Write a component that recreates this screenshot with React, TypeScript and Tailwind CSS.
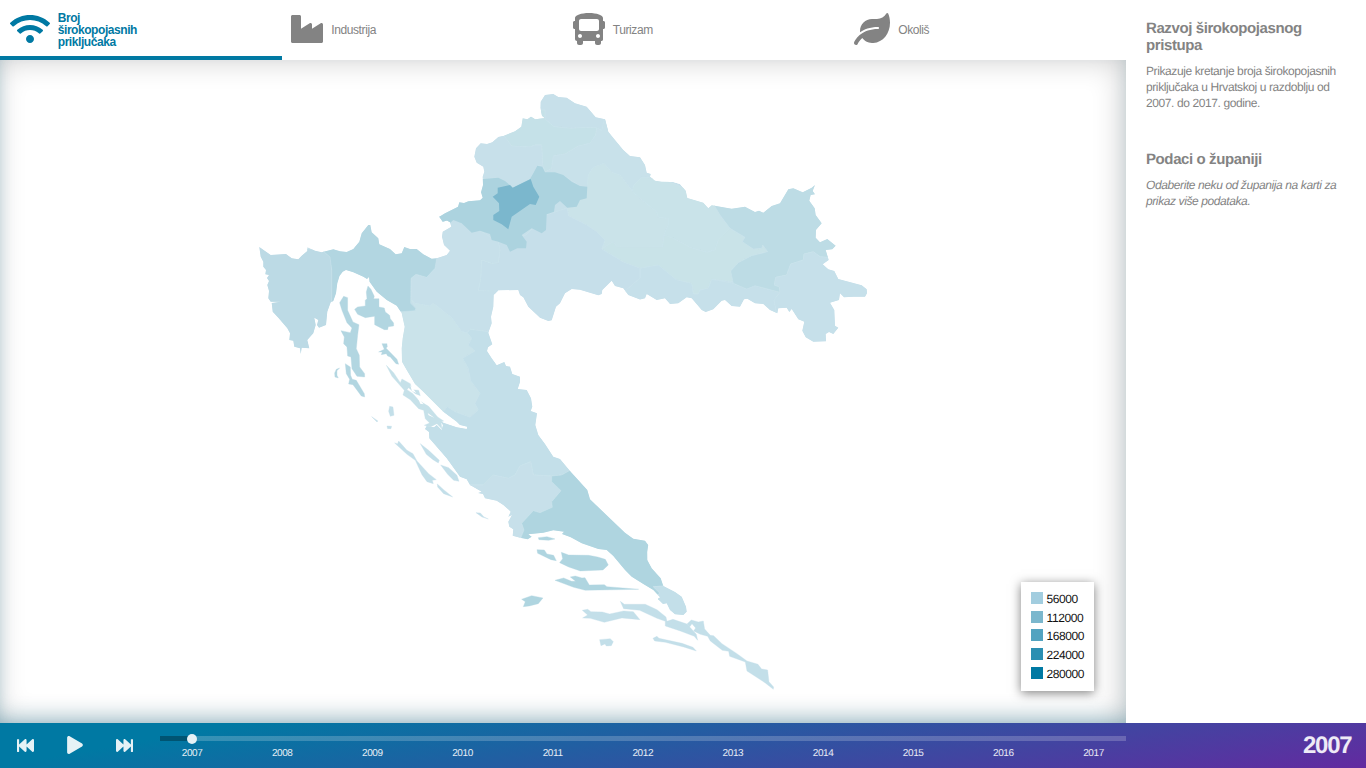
import { FaBus, FaFastBackward, FaFastForward, FaIndustry, FaLeaf, FaPlay, FaWifi } from "react-icons/fa";

const tabs = [
  { label: "Broj širokopojasnih priključaka", Icon: FaWifi, size: "w-10", active: true },
  { label: "Industrija", Icon: FaIndustry, size: "w-8", active: false },
  { label: "Turizam", Icon: FaBus, size: "w-8", active: false },
  { label: "Okoliš", Icon: FaLeaf, size: "w-9", active: false },
];

const legend = [
  { value: "56000", color: "bg-[#a2cddf]" },
  { value: "112000", color: "bg-[#7bb7cd]" },
  { value: "168000", color: "bg-[#53a3c0]" },
  { value: "224000", color: "bg-[#2b8fb2]" },
  { value: "280000", color: "bg-[#0079a3]" },
];

const years = [2007, 2008, 2009, 2010, 2011, 2012, 2013, 2014, 2015, 2016, 2017];

const mainland =
  "M540.7 101.7L540.5 108 542 115.7 545 118.3 535 119.3 531 116.7 527.3 119.3 522.7 118.3 521.3 126.7 515 131.3 504 135.7 498.3 137 492.3 142.3 487 144 480.7 143.3 476 148.3 474.3 156.7 476.7 162.7 483.3 166.7 484.3 171.7 482.7 176.7 483 185 481 192.3 482.7 197.7 480 200.3 468.3 201.3 464 203 459.3 202.3 458 206.7 445 213.3 439.3 216.7 442.7 221.7 447 220.5 450 222.3 451.3 226.7 442.7 231.7 442 236.7 444 245 450 250.7 446.7 255 436.7 258.3 431.7 258.7 423.3 254.3 416.7 249 410 249 404.3 247 401.7 253.3 395.7 254.3 390 249 379.3 244.3 378.3 238.3 371.7 232.3 370.3 225 368.3 225 361.7 233.3 359.3 241.7 353.3 249 346.7 252 340 251.3 333.3 249.3 321.7 252.3 315 250.7 307.3 247 307.3 251 301.7 255.7 298.3 259.3 291.7 258.3 286 254 270.7 255 265 251 259.3 247 260.7 256.7 263.3 261.7 263.3 266.7 266 270 265.3 274.3 269 275 267 278 269 281 267.3 285 269 291 268.3 298.3 270.7 301.7 280.7 301.7 271.7 303 272.7 311.7 278.3 317.7 287.3 328.3 290 333.3 289.3 340 293.3 340.7 294.3 346.7 300 348.3 300.7 354 301.7 347.7 309.3 348.3 307.3 340 313.3 333.3 315.7 325 314.3 317.7 318.3 320 317 325 319 327.7 326 325 327.3 311.7 330.7 302.3 333.3 301 336 293.3 337.3 283.3 339.5 276 342.7 271.7 346 270 353.3 272.3 363.3 276.7 367 279 369 277 369.5 281.7 376.7 291.7 386.7 300 396.7 305.7 401.7 313.3 404.7 326.7 402.7 338.3 401.7 348.3 402 361.7 406.7 370 415 384 423.3 391.7 443.3 411.7 456.7 421.7 460 425 467.3 426.7 466.7 429 456.7 427.3 443.3 422.7 439 420 443 425 441.7 430 436.7 425 434 427.3 426.7 426 425 429 429 432 429.3 438.3 436.7 446.7 446.7 458.3 460 476.7 466.7 479.3 470 485 481.7 491.7 478 493 483 494 485 498.3 496.7 500.7 503.3 505 509 510 510.7 511.7 508.3 516.7 512 515 508.3 521.7 509.3 526.7 513.3 529.3 512.7 535.7 520 537.7 527.7 539.3 531.7 536.7 528.3 534.3 543.3 532.7 553.3 530.3 564 531.7 562 534 570.7 537.3 581.7 543.3 598.3 549 606.7 550 613.3 556 625 570 631.7 576.7 643.3 584 653.3 590 660 597.3 658 599 663 604 666.7 603.3 670 610 675 614.3 683.3 615 686.7 611.7 686 606.7 681.7 596.7 675 592 663.3 586 660.7 578.3 651.7 568.3 647.3 560 647.2 552 648.2 545 645 540.7 633.3 538.7 625 532.7 590 499.3 587.3 490 570.7 471.7 565 465 560 459 553.3 456.7 545 444 538.3 435 535.3 425 537 413.3 530.7 411 532.3 406.7 531 398.3 526.7 390 517.7 389 520 382 520 376.7 512.3 374 510 366.7 506 366 504.3 362 496.7 365.3 491.7 358.3 487 351 488 347.3 492.3 344.3 488.3 332.7 491.7 323.3 491 316.7 493.3 306.7 493.7 295 498.3 290.3 518.3 290 520 295 523.3 297.3 528.3 306.7 540 317.7 548.3 321 551.7 320.3 556 306.7 560 303.3 565 293.3 571.7 289 580 289.7 598.3 295.3 601.7 294 602.3 290 611.7 280.7 615 286 623.3 288.3 628.3 295 640 299.5 645 298.3 646.7 294 656.7 300 665 298.3 670 304 678.3 303.3 686.7 297.3 691.7 298.3 701.7 310 705.7 312 713.3 309.3 721.7 300.7 725 300 731.7 306 740 306.7 744 299.3 747.3 298.7 755 303.3 763.3 304 770 310 777.3 313.3 778.3 308.3 786.7 307.7 789.3 312 791.7 309 798.3 319.3 804.3 321.7 802.3 330.7 805.7 337.3 813.3 341.7 826 341.3 825.7 334 829 332 833.3 334 838.3 327.7 835 325.7 834.3 310 830 302.7 839 300 840 293.3 844 297.3 853.3 296.7 865 296.7 867 293.3 866.7 289.3 861.7 285.3 838.3 279 834.3 271 828.3 269.3 822.7 264.3 828.7 260 825.7 250 832.3 249.3 835.7 245.7 827.3 239 820 242.3 815.7 237.7 816 230 821.7 223.3 815.7 215 814.7 208.3 809.3 200.7 810.7 195 815 194.3 812.7 191 815 185 811.7 187.7 802.7 192.3 793.3 188.3 788.3 189.3 780 203.3 771.7 206 763.3 212.7 759 210.7 755 212 745 206.7 731.7 208.7 711.7 205.3 708.3 208.3 703.3 202.7 687.3 198 685.7 190.7 680 184 673.3 182 661.7 181.7 655 180.7 650 176.7 650.7 174 646.7 172.7 645 165 640 157.3 630 156 623.3 150 615 140 608.3 131.7 605 119.3 595.7 117.3 586.7 106.7 575 103.3 566.7 97.7 558.3 97 553.3 94 545 95Z";

// Outer edges run past the coast; the mainland clip path trims them.
const counties = [
  { name: "Međimurska", fill: "#c7e0ea", d: "M530 85H620V131L601.7 130.7 596.7 127.7 583 127.5 570 128.3 554 126.7 545 119 530 119Z" },
  { name: "Varaždinska", fill: "#c5e1e8", d: "M545 119L554 126.7 570 128.3 583 127.5 596.7 127.7 595.7 135 590 143.3 578.3 146 565 154 553.3 156 551.7 168.3 545 172 542.7 165 541.7 145 535 145 530 147 511.7 146 504 135.7 510 110 545 110Z" },
  { name: "Koprivničko-križevačka", fill: "#c8e1ea", d: "M596.7 127.7L601.7 130.7 605 115 660 150 660 180 641.7 177.3 634 185 632.3 191 620 175 611.7 172.3 604 163.3 593.3 167.3 588.3 175 587.3 187 580 186 563 175 551.7 172 551.7 168.3 553.3 156 565 154 578.3 146 590 143.3 595.7 135Z" },
  { name: "Krapinsko-zagorska", fill: "#c7e0ea", d: "M504 135.7L511.7 146 530 147 535 145 541.7 145 542.7 165 537 166 533 174 530.7 179 512.7 187.7 498 178 465 179 465 140Z" },
  { name: "Bjelovarsko-bilogorska", fill: "#cae3e9", d: "M587 187L588.3 175 593.3 167.3 604 163.3 611.7 172.3 620 175 632.3 191 640 198.3 656.7 211.7 658.3 217.3 668.3 218.3 668.3 225 664 235 662.7 246.7 640 247.3 613.3 247 601.7 249 605 240 596.7 231.7 586.7 225 568.3 215.7 567.3 208Z" },
  { name: "Virovitičko-podravska", fill: "#c9e3e9", d: "M660 178L641.7 177.3 634 185 632.3 191 640 198.3 656.7 211.7 658.3 217.3 668.3 218.3 668.3 225 664 235 668.3 240 673.3 238.3 690 247.3 706.7 252.3 715 250 718.3 240 730 228.3 720 215 712.7 200Z" },
  { name: "Požeško-slavonska", fill: "#c9e3e8", d: "M601.7 249L613.3 241.7 617 246.7 662.7 246.7 664 235 673.3 238.3 690 247.3 706.7 252.3 715 250 718.3 240 730 228.3 745 237.3 742.3 241.7 753.3 249 761.7 248.3 762.7 245 767.7 251.7 751.7 255.7 738.3 262.7 730.7 271 733.3 281.7 711.7 279.3 708.3 288.3 700 290 698.3 294 693.3 294 691.7 283.3 676.7 280 658.3 265 640 268.3 623.3 262Z" },
  { name: "Brodsko-posavska", fill: "#c6e0ea", d: "M626 290L640 278 640 268.3 658.3 265 676.7 280 691.7 283.3 693.3 294 698.3 294 700 290 708.3 288.3 711.7 279.3 733.3 283.3 746.7 289 755 285.7 780 292.3 774 300 777.3 316 620 320Z" },
  { name: "Osječko-baranjska", fill: "#bddce5", d: "M711 200L840 175 845 250 827.3 257.3 820 256.7 813.3 251.7 804 254 803.3 260 790.7 264 786.7 275 775.7 277.3 774.3 285 779.3 286.7 780 292.3 755 285.7 746.7 289 733.3 283.3 730.7 271 738.3 262.7 751.7 255.7 767.7 251.7 762.7 245 761.7 248.3 753.3 249 742.3 241.7 745 237.3 730 228.3 720 215Z" },
  { name: "Vukovarsko-srijemska", fill: "#c6e0ea", d: "M827.3 257.3L820 256.7 813.3 251.7 804 254 803.3 260 790.7 264 786.7 275 775.7 277.3 774.3 285 779.3 286.7 780 292.3 774 300 777.3 318 800 350 880 350 880 260Z" },
  { name: "Sisačko-moslavačka", fill: "#c6dfea", d: "M498.3 242L526 235 546 215 567.3 208 568.3 215.7 586.7 225 596.7 231.7 605 240 601.7 249 623.3 262 640 268.3 640 278 626 290 620 330 520 330 493.3 291.7 478.3 290.7 480.7 278.3 481.7 260 491.7 263.3 498.3 262.7 500 250Z" },
  { name: "Karlovačka", fill: "#c7e0ea", d: "M436.7 258.3L430 220 455 215 498.3 242 500 250 498.3 262.7 491.7 263.3 481.7 260 480.7 278.3 478.3 290.7 500 291 500 329 488.3 331.7 470 329.3 467.3 332.7 461.7 331.7 451.7 317.7 433.3 303.3 430 306 415 303.3 411 300 411 278.3 416 274.3 426.7 277.3 435 268.3Z" },
  { name: "Ličko-senjska", fill: "#cae3ea", d: "M402 311.7L415 310.7 415.7 308.3 411.7 300 415 303.3 430 306 433.3 303.3 451.7 317.7 461.7 331.7 467.3 332.7 471.7 338.3 468.3 345 475 351 462.7 358.3 468.3 368.3 470.7 380.7 480 393.3 475 403.3 478.3 410 470 417.3 455 411.7 447.3 406.7 443.3 411.7 425 410 390 360Z" },
  { name: "Zadarska", fill: "#c3dfe9", d: "M467.3 332.7L470 329.3 488.3 331.7 600 330 569.3 470.7 561.7 475 551.7 476 533.3 475 530.7 461.7 520 466 515 475 508.3 478.3 493.3 475 483.3 485 470 485 410 450 410 410 443.3 411.7 447.3 406.7 455 411.7 470 417.3 478.3 410 475 403.3 480 393.3 470.7 380.7 468.3 368.3 462.7 358.3 475 351 468.3 345 471.7 338.3Z" },
  { name: "Šibensko-kninska", fill: "#c7e0ea", d: "M470 485L483.3 485 493.3 475 508.3 478.3 515 475 520 466 530.7 461.7 533.3 475 551.7 476 551.7 481.7 561 490.7 551.7 501.7 552.3 507.3 540 512.7 533.3 510.7 521.7 523.3 524 530 518.3 540 470 540Z" },
  { name: "Splitsko-dalmatinska", fill: "#afd5e0", d: "M569.3 470.7L561.7 475 551.7 476 551.7 481.7 561 490.7 551.7 501.7 552.3 507.3 540 512.7 533.3 510.7 521.7 523.3 524 530 518 545 640 600 660 600 656.7 595 660 593.3 653.3 586.7 664 586 670 540 590 470Z" },
  { name: "Dubrovačko-neretvanska", fill: "#c3dfe9", d: "M664 586L653.3 586.7 660 593.3 656.7 596 660 620 700 620 700 590Z" },
  { name: "Primorsko-goranska", fill: "#b2d6e1", d: "M436.7 258.3L435 268.3 426.7 277.3 416 274.3 411 278.3 410.7 303.3 415.7 308.3 415 310.7 402 311.7 340 300 331.7 305 331.7 270 329 257 322 251 322 215 440 215Z" },
  { name: "Istarska", fill: "#bcdae5", d: "M323 251L330 257 331.7 270 331.7 305 330 360 250 360 250 240Z" },
  { name: "Zagrebačka", fill: "#acd3df", d: "M470 179L483 179 498.3 177.7 505 181 512.7 187.7 530 179 533.3 173.3 537.3 165.7 542.3 166.7 545 172.3 555 172.3 563.3 175 571.7 181.7 580 186 587.3 186.7 586.7 198.3 580 200 576.7 206.7 567.3 207.7 560 201 555 205 554 211.7 546.7 214.3 546 230 541.7 233.3 531.7 228.3 521.7 235 526.7 241.7 526 248.3 517.3 248.3 510 251.7 506.7 245 498.3 241.7 491.7 240 490 234 480 230.7 471.7 232.7 461.7 223.3 453.3 220 450 223 430 224 430 205Z" },
  { name: "Grad Zagreb", fill: "#7bb7cd", d: "M530.7 179L533.3 186.7 539.3 196.7 535.7 205 530 204 511.7 216.7 508.3 229.3 501.7 224.3 493.3 220 493.3 215 499.3 211 499 203.3 492.7 196.7 497.7 193.3 497.7 187.7 510 185 512.7 187.7Z" },
];

function CountyMap() {
  return (
    <svg viewBox="0 60 1126 663" className="block h-full w-full">
      <clipPath id="mainland">
        <path d={mainland} />
      </clipPath>
      <g clipPath="url(#mainland)">
        <path d={mainland} fill="#c7e0ea" />
        {counties.map((c) => (
          <path key={c.name} d={c.d} fill={c.fill} stroke="#cde5ec" strokeLinejoin="round" strokeWidth={c.name === "Grad Zagreb" || c.name === "Zagrebačka" ? 0 : 0.5}>
            <title>{c.name}</title>
          </path>
        ))}
      </g>

      {/* Kvarner islands */}
      <g transform="translate(250.3 215.3) scale(.33333)" fill="#b2d6e1" stroke="#b2d6e1" strokeWidth="1" strokeLinejoin="round">
        <path d="M268 262L280 243 292 247 292 285 308 320 326 328 322 360 318 400 327 420 328 455 343 475 343 485 320 483 305 460 302 425 292 422 290 395 280 385 282 365 272 346 300 352 305 338 290 322 275 285Z" />
        <path d="M353 212L362 222 372 243 370 250 386 250 386 275 402 278 405 290 418 300 420 310 430 323 430 332 414 334 412 343 402 343 373 328 373 303 345 307 322 297 313 282 322 275 345 272 345 255 350 250 348 230Z" />
        <path d="M395 385L410 385 411 395 407 398 440 432 445 447 437 445 420 425 412 422 408 415 393 418 396 410 385 410 402 402Z" />
        <path d="M268 458L260 466 260 480 264 488 254 485 253 473 258 462Z" />
        <path d="M285 445L300 455 301 480 306 492 318 495 342 535 343 545 333 542 308 508 295 506 298 492 288 475Z" />
      </g>

      {/* Pag and the Zadar archipelago */}
      <g transform="translate(360.3 250.3) scale(.33333)" fill="#c6e1e9" stroke="#c6e1e9" strokeWidth="1" strokeLinejoin="round">
        <path d="M78 345L100 367 120 397 125 386 150 400 155 418 175 420 180 436 165 430 145 412 140 418 158 430 175 450 205 468 232 500 250 512 242 515 245 536 230 520 210 530 192 525 208 518 195 505 190 480 175 475 150 448 128 434 132 420 95 378Z" />
        <path d="M150 405L168 428 155 422ZM173 443L190 462 180 460ZM202 488L222 502 205 495Z" fill="#fff" stroke="none" />
      </g>
      <g transform="translate(360.3 370.3) scale(.33333)" fill="#c3dfe9" stroke="#c3dfe9" strokeWidth="1" strokeLinejoin="round">
        <path d="M88 108L98 110 101 135 90 138 85 123ZM80 167L94 168 92 175 82 175ZM34 139L53 152 50 155Z" />
        <path d="M103 218L112 220 115 212 140 240 158 250 170 272 205 310 228 328 216 330 219 340 200 334 185 313 165 270 140 252Z" />
        <path d="M180 220L205 240 237 270 234 278 218 268 198 252ZM241 284L265 292 290 315 296 333 280 330 262 312Z" />
        <path d="M231 341L250 358 277 380 250 370 232 350ZM347 427L360 428 371 440 384 446 365 440Z" />
      </g>

      {/* Central and southern Dalmatian islands */}
      <g transform="translate(510.3 460.3) scale(.33333)" fill="#afd5e0" stroke="#afd5e0" strokeWidth="1" strokeLinejoin="round">
        <path d="M84 232L110 229 134 236 115 240 86 238Z" />
        <path d="M80 268L102 269 110 281 130 285 138 301 122 298 82 279Z" />
        <path d="M153 276L175 284 235 285 262 290 285 297 294 314 278 329 210 332 175 320 148 307 157 295Z" />
        <path d="M134 360L160 353 184 363 196 363 180 350 195 347 215 353 224 352 237 374 282 373 290 379 385 387 225 390 190 381Z" />
        <path d="M34 417L64 406 98 413 84 430 57 437 39 439 45 424Z" />
      </g>
      <g transform="translate(510.3 460.3) scale(.33333)" fill="#c3dfe9" stroke="#c3dfe9" strokeWidth="1" strokeLinejoin="round">
        <path d="M216 450L232 447 242 454 276 455 298 461 340 452 369 454 389 478 335 473 282 486 240 474 217 473 232 464Z" />
        <path d="M330 423L342 432 375 432 405 432 440 448 467 470 470 483 488 477 530 491 558 522 562 540 552 528 510 512 465 497 465 483 440 474 388 450 340 445Z" />
        <path d="M268 538L300 535 309 544 303 556 288 557 284 551 272 556Z" />
        <path d="M428 534L440 528 446 534 515 549 548 561 558 572 520 560 465 546 433 542Z" />
        <path d="M530 491L543 479 564 485 579 482 583 506 600 525 610 526 635 550 680 580 710 602 743 612 754 626 772 629 776 664 790 680 789 687 765 668 710 632 705 605 658 588 655 573 636 570 600 542 592 528 570 522 550 512 556 503 545 490 538 500Z" />
      </g>
    </svg>
  );
}

export default function App() {
  return (
    <div className="flex h-screen w-screen flex-col overflow-hidden bg-white font-['Liberation_Sans',Arial,sans-serif] text-xs tracking-[-0.4px] text-[#838383] [text-rendering:geometricPrecision]">
      <div className="flex min-h-0 flex-1">
        <main className="flex w-[1126px] flex-col">
          <nav className="grid h-[60px] shrink-0 grid-cols-4">
            {tabs.map(({ label, Icon, size, active }) => (
              <button
                key={label}
                className={
                  active
                    ? "flex items-center gap-2 border-b-4 border-[#0079a3] pt-1 pl-[9.75px] text-left font-bold tracking-[-0.44px] text-[#0079a3]"
                    : "flex items-center gap-2 pl-[9.75px] text-left"
                }
              >
                <Icon className={`${size} mb-0.5 h-8 shrink-0`} />
                <span className="w-[100px] leading-3">{label}</span>
              </button>
            ))}
          </nav>
          <section className="relative min-h-0 flex-1">
            <CountyMap />
            <div className="pointer-events-none absolute inset-0 shadow-[inset_-4px_0_30px_rgba(0,0,0,0.2),inset_0_-12px_24px_-12px_rgba(0,121,163,0.4),inset_6px_0_16px_-10px_rgba(0,121,163,0.12)]" />
            <ul className="absolute right-8 bottom-8 flex h-[109px] w-[73px] flex-col bg-white pt-[6.67px] pl-2.5 text-[#111] shadow-[0_2px_10px_rgba(0,0,0,0.5)]">
              {legend.map(({ value, color }) => (
                <li key={value} className="flex h-[18.66px] items-center gap-[3.5px]">
                  <span className={`size-3 shrink-0 ${color}`} />
                  <span className="pt-[1.8px]">{value}</span>
                </li>
              ))}
            </ul>
          </section>
        </main>
        <aside className="w-[240px] pt-5 pl-5">
          <h2 className="w-[190px] text-[15px] leading-[17px] font-bold">Razvoj širokopojasnog pristupa</h2>
          <p className="mt-[9px] w-[205px] leading-4">Prikazuje kretanje broja širokopojasnih priključaka u Hrvatskoj u razdoblju od 2007. do 2017. godine.</p>
          <h2 className="mt-10 text-[15px] leading-[17px] font-bold">Podaci o županiji</h2>
          <p className="mt-[9px] w-[205px] leading-4 italic">Odaberite neku od županija na karti za prikaz više podataka.</p>
        </aside>
      </div>
      <footer className="flex h-[45px] shrink-0 bg-[linear-gradient(170deg,#0079a3_15%,#632aa0)] text-white/90">
        <div className="flex w-40 items-center pb-px pl-[17px]">
          <FaFastBackward className="size-[17px]" />
          <FaPlay className="ml-[33px] h-[18px] w-4" />
          <FaFastForward className="ml-[33px] size-[17px]" />
        </div>
        <div className="flex w-[966px] flex-col pt-[13px]">
          <div className="flex h-[5px] items-center bg-white/20">
            <div className="h-full w-8 bg-[#005472]" />
            <div className="-ml-[5px] size-2.5 shrink-0 rounded-full bg-[#e6f2f6]" />
          </div>
          <div className="mt-[5px] -mr-[13px] -ml-[13px] flex text-[10px] leading-[15px]">
            {years.map((y) => (
              <span key={y} className="w-[90.15px] shrink-0 text-center">
                {y}
              </span>
            ))}
          </div>
        </div>
        <div className="flex flex-1 items-center justify-end pr-[14.5px] text-2xl font-bold tracking-[-1.2px]">2007</div>
      </footer>
    </div>
  );
}
